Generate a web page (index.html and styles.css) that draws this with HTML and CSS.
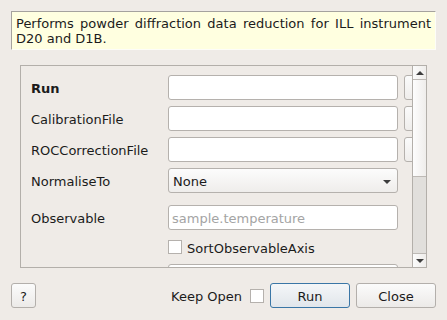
FILE: index.html
```html
<!DOCTYPE html>
<html lang="en">
<head>
    <meta charset="UTF-8">
    <meta name="viewport" content="width=device-width, initial-scale=1.0">
    <title>PowderDiffILLReduction</title>
    <link rel="stylesheet" href="styles.css">
</head>
<body>
    <div class="dialog">
        <div class="description">Performs powder diffraction data reduction for ILL instrument D20 and D1B.</div>

        <div class="panel">
            <div class="viewport">
                <div class="form">
                    <div class="row">
                        <span class="label bold">Run</span>
                        <span class="field"></span>
                        <span class="browse"></span>
                    </div>
                    <div class="row">
                        <span class="label">CalibrationFile</span>
                        <span class="field"></span>
                        <span class="browse"></span>
                    </div>
                    <div class="row">
                        <span class="label">ROCCorrectionFile</span>
                        <span class="field"></span>
                        <span class="browse"></span>
                    </div>
                    <div class="row">
                        <span class="label">NormaliseTo</span>
                        <span class="field combo"><span class="text">None</span><i class="combo-arrow"></i></span>
                    </div>
                    <div class="row row-wide">
                        <span class="label">Observable</span>
                        <span class="field placeholder"><span class="text">sample.temperature</span></span>
                    </div>
                    <div class="row row-check">
                        <span class="label"></span>
                        <span class="checkbox"></span>
                        <span class="check-label">SortObservableAxis</span>
                    </div>
                    <div class="row row-next">
                        <span class="label"></span>
                        <span class="field"></span>
                    </div>
                </div>
            </div>
            <div class="scrollbar">
                <div class="scroll-btn"><i class="arrow-up"></i></div>
                <div class="scroll-handle"></div>
                <div class="scroll-groove"></div>
                <div class="scroll-btn scroll-btn-down"><i class="arrow-down"></i></div>
            </div>
        </div>

        <div class="buttons">
            <button class="btn btn-help">?</button>
            <div class="spacer"></div>
            <span class="keep-open">Keep Open</span>
            <span class="checkbox keep-check"></span>
            <button class="btn btn-main default">Run</button>
            <button class="btn btn-main">Close</button>
        </div>
    </div>
</body>
</html>
```

FILE: styles.css
```css
* {
    margin: 0;
    padding: 0;
    box-sizing: border-box;
}

body {
    font-family: "DejaVu Sans", "Liberation Sans", sans-serif;
    font-size: 13px;
    color: #1b1b1b;
    background-color: #efebe7;
    width: 447px;
    height: 320px;
    overflow: hidden;
}

.dialog {
    padding: 11px 11px 0 11px;
    display: flex;
    flex-direction: column;
}

.description {
    height: 39px;
    background: #ffffe0;
    border: 1px solid #a5a29e;
    border-right-color: #fdfdf8;
    border-bottom-color: #fdfdf8;
    padding: 4px 4px 0 4px;
    line-height: 15px;
    text-align: justify;
}

.panel {
    margin: 15px 0 0 9px;
    width: 407px;
    height: 203px;
    border: 1px solid #b3afaa;
    display: flex;
}

.viewport {
    flex: 1;
    overflow: hidden;
}

.form {
    display: flex;
    flex-direction: column;
    gap: 6px;
    padding: 9px 0 0 10px;
}

.row {
    display: flex;
    align-items: center;
    height: 25px;
    flex-shrink: 0;
}

.row-wide {
    margin-top: 6px;
}

.row-check {
    height: 14px;
    margin-top: 4px;
}

.row-next {
    margin-top: 4px;
}

.label,
.text,
.check-label,
.keep-open {
    line-height: 15px;
    padding-top: 2px;
}

.label {
    width: 137px;
    flex-shrink: 0;
}

.bold {
    font-weight: bold;
}

.field {
    width: 230px;
    height: 25px;
    flex-shrink: 0;
    background: #fff;
    border: 1px solid #b5b1ad;
    border-radius: 3px;
    display: flex;
    align-items: center;
    padding-left: 4px;
}

.placeholder {
    color: #a4a4a4;
    padding-left: 3px;
}

.combo {
    background: linear-gradient(#fcfcfc, #efedeb);
    position: relative;
}

.combo-arrow {
    position: absolute;
    right: 6px;
    top: 11px;
    width: 0;
    height: 0;
    border-left: 4px solid transparent;
    border-right: 4px solid transparent;
    border-top: 4px solid #3d3d3d;
}

.browse {
    margin-left: 6px;
    width: 30px;
    height: 25px;
    flex-shrink: 0;
    background: linear-gradient(#fbfbfb, #efedeb);
    border: 1px solid #b5b1ad;
    border-radius: 3px;
}

.checkbox {
    width: 14px;
    height: 14px;
    background: #fff;
    border: 1px solid #b5b1ad;
    flex-shrink: 0;
}

.check-label {
    margin-left: 5px;
}

.scrollbar {
    width: 14px;
    border-left: 1px solid #b3afaa;
    display: flex;
    flex-direction: column;
}

.scroll-btn {
    height: 14px;
    border-bottom: 1px solid #bdb9b5;
    background: linear-gradient(90deg, #fbfbfb, #efedeb);
    display: flex;
    align-items: center;
    justify-content: center;
}

.scroll-btn-down {
    border-bottom: none;
    border-top: 1px solid #bdb9b5;
}

.arrow-up {
    width: 0;
    height: 0;
    border-left: 4px solid transparent;
    border-right: 4px solid transparent;
    border-bottom: 4px solid #3d3d3d;
}

.arrow-down {
    width: 0;
    height: 0;
    border-left: 4px solid transparent;
    border-right: 4px solid transparent;
    border-top: 4px solid #3d3d3d;
}

.scroll-handle {
    height: 97px;
    background: linear-gradient(90deg, #fdfdfd, #efedeb);
    border-bottom: 1px solid #bdb9b5;
}

.scroll-groove {
    flex: 1;
    background: #e1dfdc;
}

.buttons {
    margin-top: 15px;
    display: flex;
    align-items: center;
    height: 25px;
}

.btn {
    font-family: inherit;
    font-size: 13px;
    color: #1b1b1b;
    height: 25px;
    padding-top: 1px;
    border: 1px solid #b3afab;
    border-radius: 3px;
    background: linear-gradient(#fbfbfb, #eceae8);
}

.btn-help {
    width: 25px;
}

.spacer {
    flex: 1;
}

.keep-open {
    margin-right: 1px;
}

.keep-check {
    margin-left: 7px;
    margin-right: 6px;
}

.btn-main {
    width: 80px;
}

.btn-main + .btn-main {
    margin-left: 6px;
}

.default {
    border-color: #3a76a6;
    background: linear-gradient(#f4f6f8, #e1e6eb);
}
```
